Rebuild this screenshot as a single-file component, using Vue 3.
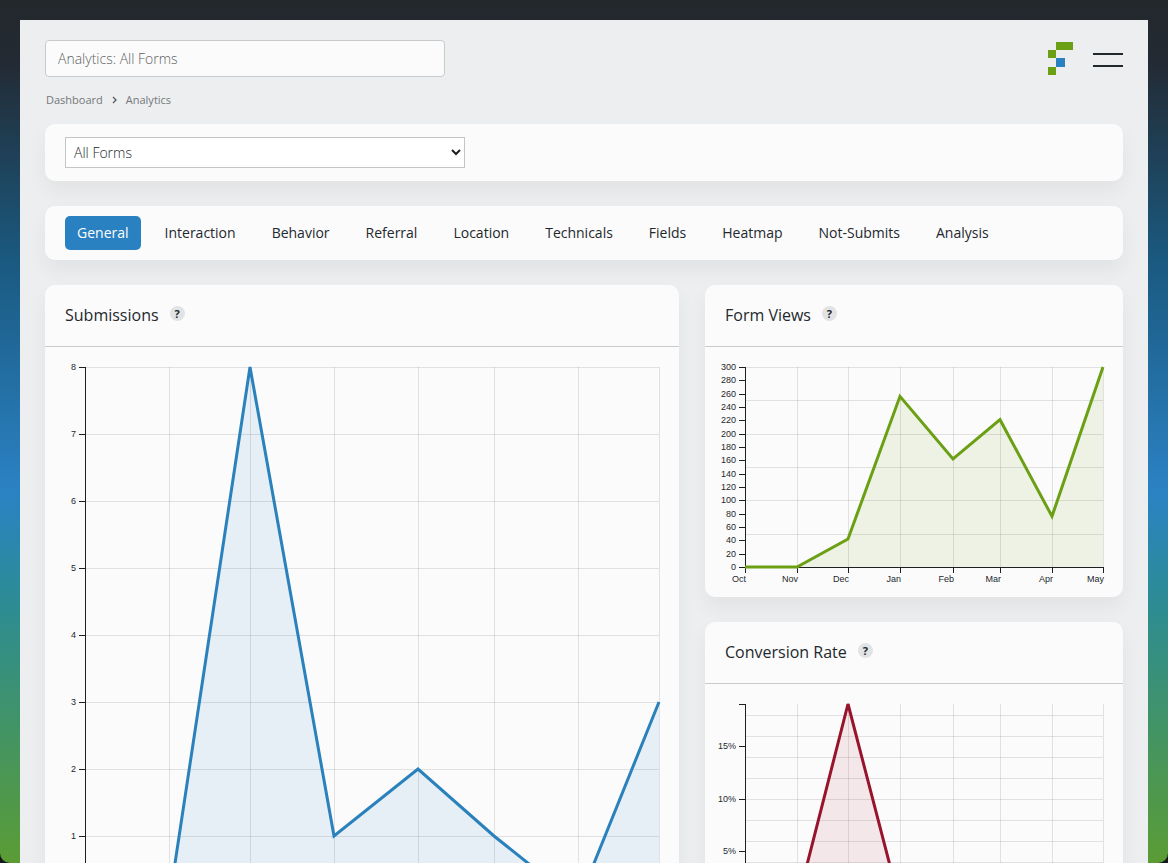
<script setup>
const tabs = ['General', 'Interaction', 'Behavior', 'Referral', 'Location', 'Technicals', 'Fields', 'Heatmap', 'Not-Submits', 'Analysis']
const months = ['Oct', 'Nov', 'Dec', 'Jan', 'Feb', 'Mar', 'Apr', 'May']
const dayOffsets = [0, 31, 61, 92, 123, 151, 182, 212]

function makeChart({ id, title, width, left, right, bottom, max, values, ticks, gridRows, unit = '', cap = false, color, fill }) {
  const top = 20
  const xs = dayOffsets.map((d) => Math.round(left + ((right - left) * d) / 212))
  const y = (v) => bottom - ((bottom - top) * v) / max
  const line = values.map((v, i) => `${xs[i]},${y(v)}`).join(' ')
  return {
    id, title, width, left, right, top, bottom, xs, cap, color, fill, line,
    height: bottom + 30,
    area: `${left},${bottom} ${line} ${right},${bottom}`,
    rows: gridRows.map((v) => Math.round(y(v))),
    ticks: ticks.map((v) => ({ label: v + unit, y: Math.round(y(v)) }))
  }
}

const range = (from, to, step) => {
  const out = []
  for (let v = from; v <= to; v += step) out.push(v)
  return out
}

const submissions = makeChart({
  id: 'submissions', title: 'Submissions', width: 634, left: 40, right: 614, bottom: 556, max: 8,
  values: [0, 0, 8, 1, 2, 1, 0, 3], ticks: range(0, 8, 1), gridRows: range(1, 8, 1),
  color: '#2a81bb', fill: '#e5eff5'
})
const views = makeChart({
  id: 'views', title: 'Form Views', width: 418, left: 40, right: 398, bottom: 220, max: 300,
  values: [0, 0, 42, 256, 162, 221, 76, 300], ticks: range(0, 300, 20), gridRows: range(50, 300, 50),
  color: '#6b9f14', fill: '#edf2e4'
})
const conversion = makeChart({
  id: 'conversion', title: 'Conversion Rate', width: 418, left: 40, right: 398, bottom: 220, max: 19,
  values: [0, 0, 19, 0, 1, 0, 0, 1], ticks: range(0, 15, 5), gridRows: range(2, 18, 2), unit: '%', cap: true,
  color: '#98142c', fill: '#f4e7ea'
})
const columns = [[submissions], [views, conversion]]
</script>

<template>
  <div class="backdrop">
    <div class="page">
      <header class="top">
        <input class="search" type="text" aria-label="Search" placeholder="Analytics: All Forms" />
        <div class="brand">
          <a href="#" aria-label="Home">
            <svg class="logo" width="25" height="33" viewBox="0 0 25 33" shape-rendering="crispEdges">
              <path d="M8 0h17v8H8zM0 8h8v8H0zM0 25h8v8H0z" fill="#6b9f14" />
              <path d="M8 16h9v9H8z" fill="#2a81c1" />
            </svg>
          </a>
          <button class="menu" type="button" aria-label="Menu"><span></span><span></span></button>
        </div>
      </header>
      <nav class="crumbs" aria-label="Breadcrumb">
        <a href="#">Dashboard</a>
        <svg width="5" height="8" viewBox="0 0 5 8"><path d="M1 1l3 3-3 3" fill="none" stroke="#555a5e" stroke-width="1.3" /></svg>
        <a href="#">Analytics</a>
      </nav>

      <section class="card filter">
        <div class="select-wrap">
          <select aria-label="Form"><option>All Forms</option></select>
          <svg width="10" height="7" viewBox="0 0 10 7"><path d="M1 1l4 4 4-4" fill="none" stroke="#1d2023" stroke-width="2" /></svg>
        </div>
      </section>

      <nav class="card tabs" aria-label="Reports">
        <a v-for="(tab, i) in tabs" :key="tab" href="#" :class="{ active: i === 0 }">{{ tab }}</a>
      </nav>

      <main class="grid">
        <div v-for="(column, ci) in columns" :key="ci" class="column">
          <section v-for="c in column" :key="c.id" class="card chart">
            <div class="chart-head">
              <h2>{{ c.title }}</h2>
              <button type="button" class="help" :aria-label="'About ' + c.title">?</button>
            </div>
            <svg class="plot" :viewBox="`0 0 ${c.width} ${c.height}`" role="img" :aria-label="c.title">
              <polygon :points="c.area" :fill="c.fill" />
              <g class="gridlines">
                <line v-for="x in c.xs.slice(1)" :key="'x' + x" :x1="x + 0.5" :x2="x + 0.5" :y1="c.top" :y2="c.bottom" />
                <line v-for="r in c.rows" :key="'r' + r" :x1="c.left" :x2="c.right" :y1="r + 0.5" :y2="r + 0.5" />
              </g>
              <g class="axis">
                <line :x1="c.left + 0.5" :x2="c.left + 0.5" :y1="c.top" :y2="c.bottom + 6" />
                <line :x1="c.left" :x2="c.right + 1" :y1="c.bottom + 0.5" :y2="c.bottom + 0.5" />
                <line v-if="c.cap" :x1="c.left - 6" :x2="c.left" :y1="c.top + 0.5" :y2="c.top + 0.5" />
                <line v-for="t in c.ticks" :key="t.label" :x1="c.left - 6" :x2="c.left" :y1="t.y + 0.5" :y2="t.y + 0.5" />
                <line v-for="x in c.xs" :key="x" :x1="x + 0.5" :x2="x + 0.5" :y1="c.bottom" :y2="c.bottom + 6" />
              </g>
              <g class="labels">
                <text v-for="t in c.ticks" :key="t.label" :x="c.left - 9" :y="t.y + 3">{{ t.label }}</text>
                <text v-for="(m, i) in months" :key="m" :x="c.xs[i] + 1" :y="c.bottom + 15">{{ m }}</text>
              </g>
              <polyline :points="c.line" fill="none" :stroke="c.color" stroke-width="3" />
            </svg>
          </section>
        </div>
      </main>
    </div>
  </div>
</template>

<style>
body { margin: 0; background: #15191a; }
</style>

<style scoped>
* { box-sizing: border-box; }
.backdrop {
  height: 100vh;
  overflow-y: auto;
  scrollbar-width: none;
  padding: 20px 20px 0;
  border-radius: 0 0 10px 10px;
  background: linear-gradient(#23282c 0%, #232a33 7%, #1a597f 30%, #2b82c4 57%, #2c8c93 70%, #5a9c34 100%);
  font-family: "Open Sans", sans-serif;
  color: #23282d;
}
.page {
  min-height: 100%;
  padding: 20px 25px;
  background: #edeef0;
}
.top, .brand, .crumbs, .tabs, .chart-head { display: flex; align-items: center; }
.top { justify-content: space-between; }
.search {
  width: 400px;
  height: 37px;
  padding: 0 12px;
  border: 1px solid #c8cbce;
  border-radius: 4px;
  background: #fbfbfb;
  font: 300 14px "Open Sans", sans-serif;
}
.search::placeholder { color: #5c5f62; opacity: 1; }
.brand { gap: 20px; }
.logo { display: block; }
.menu {
  display: grid;
  gap: 10px;
  width: 30px;
  padding: 2px 0 0;
  border: 0;
  background: none;
}
.menu span { height: 2px; background: #23282d; }
.crumbs {
  gap: 9px;
  height: 47px;
  padding: 0 0 2px 1px;
  font-size: 11px;
}
.crumbs a { color: #74777a; text-decoration: none; }
.card {
  border-radius: 10px;
  background: #fbfbfb;
  box-shadow: 0 10px 20px rgba(0, 0, 0, 0.05);
}
.filter { padding: 13px 20px; margin-bottom: 25px; }
.select-wrap { position: relative; width: 400px; }
.select-wrap select {
  display: block;
  width: 100%;
  height: 31px;
  padding: 0 8px;
  border: 1px solid #c3c6c9;
  border-radius: 0;
  appearance: none;
  background: #fff;
  color: #23282d;
  font: 300 14px "Open Sans", sans-serif;
}
.select-wrap svg { position: absolute; right: 4px; top: 12px; pointer-events: none; }
.tabs { gap: 12px; height: 54px; padding: 0 20px; margin-bottom: 25px; }
.tabs a {
  padding: 0 12px;
  border-radius: 5px;
  color: #23282d;
  font-size: 14px;
  line-height: 34px;
  text-decoration: none;
}
.tabs a.active { background: #2a81c1; color: #fff; }
.grid { display: grid; grid-template-columns: 634fr 418fr; gap: 26px; align-items: start; }
.column { display: grid; gap: 25px; }
.chart-head { gap: 11px; height: 62px; padding: 0 20px 2px; border-bottom: 1px solid #c8cbcd; }
h2 { margin: 0; font-size: 16px; font-weight: 500; line-height: 22px; }
.help {
  width: 15px;
  height: 15px;
  padding: 0;
  margin-bottom: 3px;
  border: 0;
  border-radius: 50%;
  background: #e2e3e4;
  color: #23282d;
  font: 700 11px/15px "Open Sans", sans-serif;
}
.plot { display: block; width: 100%; height: auto; }
.gridlines { stroke: rgba(0, 0, 0, 0.1); }
.axis { stroke: #1d2023; }
.labels { fill: #23282d; font: 9px "Liberation Sans", sans-serif; text-anchor: end; }
</style>
